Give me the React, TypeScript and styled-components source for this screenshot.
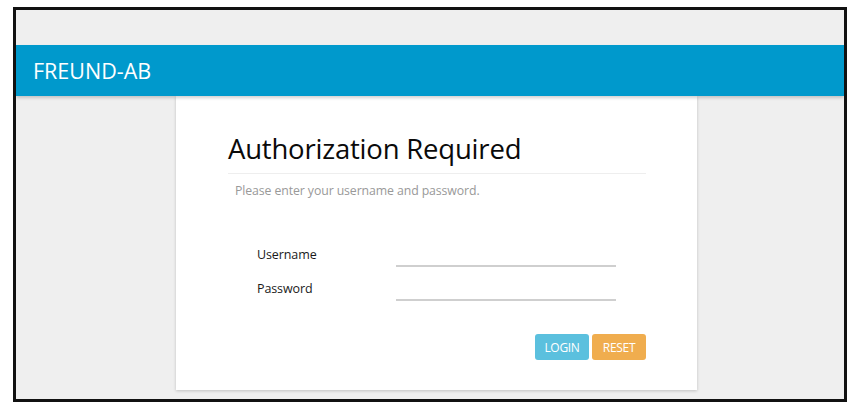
import React from "react";
import styled, { createGlobalStyle } from "styled-components";

const Global = createGlobalStyle`
  html, body { margin: 0; padding: 0; background: #ffffff; }
  body { font-family: "Open Sans", "Noto Sans", sans-serif; }
`;

const Page = styled.div`
  padding: 7px 9px 0 13px;
`;

const Frame = styled.div`
  width: 828px;
  height: 389px;
  border: 3px solid #111;
  background: #efefef;
  display: flex;
  flex-direction: column;
  overflow: hidden;
`;

const Header = styled.header`
  margin-top: 35px;
  height: 51px;
  background: #0099cc;
  box-shadow: 0 2px 3px rgba(0, 0, 0, 0.18);
  display: flex;
  align-items: center;
  padding-left: 17px;
  position: relative;
  z-index: 1;
`;

const Brand = styled.h1`
  margin: 0;
  font-family: "Open Sans", "Noto Sans", sans-serif;
  font-weight: 400;
  font-size: 21.5px;
  color: #ffffff;
  letter-spacing: 0;
`;

const Main = styled.main`
  flex: 1;
  padding: 0 0 9px 160px;
  display: flex;
`;

const Card = styled.section`
  width: 521px;
  background: #ffffff;
  box-shadow: 0 1px 3px rgba(0, 0, 0, 0.2);
  padding: 33px 51px 0 52px;
  box-sizing: border-box;
  display: flex;
  flex-direction: column;
`;

const Title = styled.h2`
  margin: 0;
  font-family: "Open Sans", "Noto Sans", sans-serif;
  font-weight: 400;
  font-size: 27.5px;
  letter-spacing: -0.2px;
  color: #0a0a0a;
  line-height: 40px;
  padding-bottom: 4px;
  border-bottom: 1px solid #eeeeee;
`;

const Subtitle = styled.p`
  margin: 8px 0 0 7px;
  font-size: 12.3px;
  color: #999;
  letter-spacing: -0.1px;
`;

const Fields = styled.div`
  margin-top: 48px;
  padding-left: 29px;
  display: flex;
  flex-direction: column;
  gap: 14px;
`;

const Row = styled.div`
  display: grid;
  grid-template-columns: 139px 220px;
  align-items: end;
  height: 20px;
`;

const Label = styled.label`
  font-size: 12.5px;
  color: #1a1a1a;
  align-self: start;
  line-height: 16px;
  letter-spacing: -0.1px;
`;

const Input = styled.input`
  border: none;
  border-bottom: 2px solid #cfcfcf;
  outline: none;
  background: transparent;
  height: 18px;
  padding: 0;
  margin: 0;
`;

const Actions = styled.div`
  margin-top: 33px;
  display: flex;
  justify-content: flex-end;
  gap: 3px;
`;

const Button = styled.button<{ $tone: "info" | "warn" }>`
  width: 54px;
  height: 26px;
  border: none;
  border-radius: 3px;
  color: #fff;
  font-family: "Open Sans", "Noto Sans", sans-serif;
  font-size: 12px;
  letter-spacing: -0.3px;
  padding: 0;
  background: ${(p) => (p.$tone === "info" ? "#5bc0de" : "#f0ad4e")};
`;

export default function App() {
  return (
    <>
      <Global />
      <Page>
        <Frame>
          <Header>
            <Brand>FREUND-AB</Brand>
          </Header>
          <Main>
            <Card>
              <Title>Authorization Required</Title>
              <Subtitle>Please enter your username and password.</Subtitle>
              <Fields>
                <Row>
                  <Label>Username</Label>
                  <Input type="text" />
                </Row>
                <Row>
                  <Label>Password</Label>
                  <Input type="password" />
                </Row>
              </Fields>
              <Actions>
                <Button $tone="info">LOGIN</Button>
                <Button $tone="warn">RESET</Button>
              </Actions>
            </Card>
          </Main>
        </Frame>
      </Page>
    </>
  );
}
